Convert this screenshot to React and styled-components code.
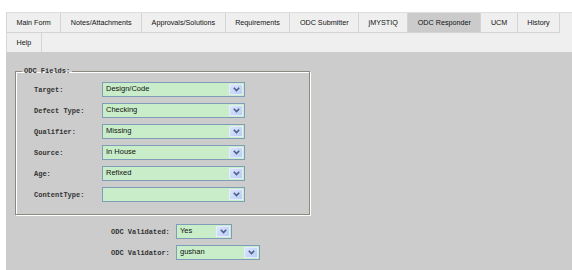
import React from 'react';
import styled, { createGlobalStyle } from 'styled-components';

const GlobalStyle = createGlobalStyle`
  body {
    margin: 0;
    background: #fff;
  }
`;

const Page = styled.div`
  padding: 12px 0 0 6px;
  height: 270px;
  box-sizing: border-box;
  display: flex;
  flex-direction: column;
  overflow: hidden;
`;

const TabBar = styled.div`
  background: #efefef;
  border-left: 1px solid #d6d6d6;
  border-top: 1px solid #dcdcdc;
`;

const TabRow = styled.div`
  display: flex;
`;

const Tab = styled.div`
  height: 19px;
  line-height: 19px;
  padding: 0 9.5px;
  font-family: 'Liberation Sans', Arial, sans-serif;
  font-size: 7.2px;
  color: #111;
  white-space: nowrap;
  border-right: 1px solid #d4d4d4;
  border-bottom: ${props => (props.last ? 'none' : '1px solid #d4d4d4')};
  background: ${props => (props.active ? '#cbcbcb' : 'transparent')};
`;

const Content = styled.div`
  flex: 1;
  background: #cccccc;
  padding-top: 14px;
`;

const FieldBox = styled.fieldset`
  margin: 0 0 0 9px;
  width: 295px;
  box-sizing: border-box;
  padding: 0 0 12px 18px;
  border: 1px solid #8b8b7d;
  box-shadow: 1px 1px 0 #fff, inset 1px 1px 0 #fff;
`;

const Legend = styled.legend`
  margin-left: -12px;
  padding: 0 2px;
  line-height: 10px;
  font-family: 'Liberation Mono', 'Courier New', monospace;
  font-size: 7px;
  font-weight: bold;
  color: #333;
`;

const FieldGrid = styled.div`
  display: grid;
  grid-template-columns: ${props => props.labelWidth}px auto;
  row-gap: 6px;
  align-items: center;
  justify-content: start;
  padding-top: ${props => props.top || 0}px;
  padding-left: ${props => props.left || 0}px;
`;

const Label = styled.span`
  font-family: 'Liberation Mono', 'Courier New', monospace;
  font-size: 7px;
  font-weight: bold;
  color: #333;
  white-space: nowrap;
`;

const SelectBox = styled.div`
  width: ${props => props.width}px;
  height: 15px;
  box-sizing: border-box;
  border: 1px solid #7f9db9;
  background: #c8edc8;
  display: flex;
  align-items: stretch;
`;

const SelectValue = styled.span`
  flex: 1;
  padding-left: 3px;
  line-height: 12px;
  font-family: 'Liberation Sans', Arial, sans-serif;
  font-size: 7.5px;
  color: #111;
`;

const ArrowButton = styled.span`
  width: 14px;
  margin: 1px;
  box-sizing: border-box;
  border: 1px solid #e4ecfd;
  background: linear-gradient(135deg, #dbe5fc 0%, #b9cdf6 100%);
  display: flex;
  align-items: center;
  justify-content: center;
`;

const Chevron = () => (
  <svg width="7" height="5" viewBox="0 0 7 5">
    <path d="M0.8 0.8 L3.5 3.6 L6.2 0.8" fill="none" stroke="#4d5e86" strokeWidth="1.6" />
  </svg>
);

const Select = ({ value, width }) => (
  <SelectBox width={width}>
    <SelectValue>{value}</SelectValue>
    <ArrowButton>
      <Chevron />
    </ArrowButton>
  </SelectBox>
);

const tabRows = [
  [
    'Main Form',
    'Notes/Attachments',
    'Approvals/Solutions',
    'Requirements',
    'ODC Submitter',
    'jMYSTIQ',
    'ODC Responder',
    'UCM',
    'History',
  ],
  ['Help'],
];

const odcFields = [
  ['Target:', 'Design/Code'],
  ['Defect Type:', 'Checking'],
  ['Qualifier:', 'Missing'],
  ['Source:', 'In House'],
  ['Age:', 'Refixed'],
  ['ContentType:', ''],
];

const App = () => (
  <>
    <GlobalStyle />
    <Page>
      <TabBar>
        {tabRows.map((row, i) => (
          <TabRow key={`row-${i}`}>
            {row.map(name => (
              <Tab key={name} active={name === 'ODC Responder'} last={i === tabRows.length - 1}>
                {name}
              </Tab>
            ))}
          </TabRow>
        ))}
      </TabBar>
      <Content>
        <FieldBox>
          <Legend>ODC Fields:</Legend>
          <FieldGrid labelWidth={68} top={6}>
            {odcFields.map(([label, value]) => (
              <React.Fragment key={label}>
                <Label>{label}</Label>
                <Select value={value} width={143} />
              </React.Fragment>
            ))}
          </FieldGrid>
        </FieldBox>
        <FieldGrid labelWidth={65} top={9} left={105}>
          <Label>ODC Validated:</Label>
          <Select value="Yes" width={56} />
          <Label>ODC Validator:</Label>
          <Select value="gushan" width={84} />
        </FieldGrid>
      </Content>
    </Page>
  </>
);

export default App;
